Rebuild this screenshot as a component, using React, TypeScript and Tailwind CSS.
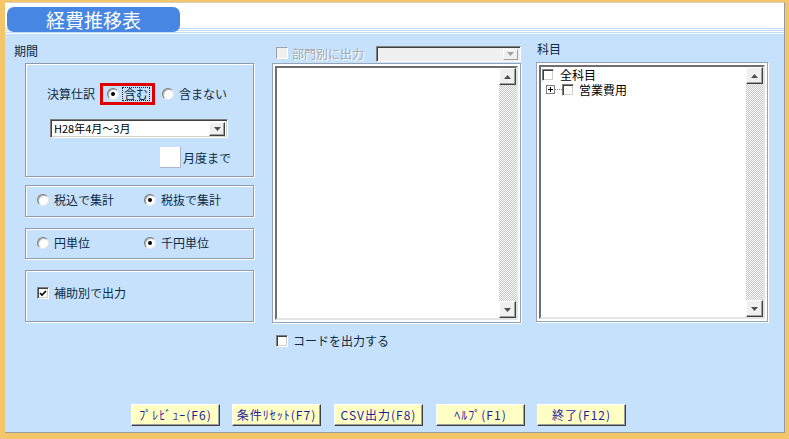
import React from 'react';

const etched = 'border border-[#8d9bab] shadow-[1px_1px_0_#ffffff,inset_1px_1px_0_#ffffff]';
const raised =
  'border border-t-white border-l-white border-r-[#404040] border-b-[#404040] shadow-[inset_-1px_-1px_0_#a0a0a0]';
const sunken =
  'border border-t-[#808080] border-l-[#808080] border-r-white border-b-white shadow-[inset_1px_1px_0_#404040,inset_-1px_-1px_0_#d4d0c8]';

const Radio = ({ checked, className = '' }: { checked?: boolean; className?: string }) => (
  <span
    className={`inline-flex w-[12px] h-[12px] shrink-0 items-center justify-center rounded-full bg-white border border-t-[#7a7a7a] border-l-[#7a7a7a] border-r-[#e6e6e6] border-b-[#e6e6e6] shadow-[inset_1px_1px_0_#b0b0b0] ${className}`}
  >
    {checked && <span className="w-[4px] h-[4px] rounded-full bg-black" />}
  </span>
);

const Check = ({ checked, disabled }: { checked?: boolean; disabled?: boolean }) => (
  <span
    className={`inline-flex w-[12px] h-[12px] shrink-0 items-center justify-center ${
      disabled
        ? 'bg-[#f0f0f0] border border-t-[#a0a0a0] border-l-[#a0a0a0] border-r-white border-b-white'
        : 'bg-white ' + sunken
    }`}
  >
    {checked && (
      <svg width="8" height="7" viewBox="0 0 8 7">
        <path d="M1 3 L3 5 L7 1" stroke="#000" strokeWidth="1.6" fill="none" />
      </svg>
    )}
  </span>
);

const Arrow = ({ down, color = '#505050' }: { down?: boolean; color?: string }) => (
  <svg width="7" height="4" viewBox="0 0 7 4">
    {down ? <polygon points="0,0 7,0 3.5,4" fill={color} /> : <polygon points="0,4 7,4 3.5,0" fill={color} />}
  </svg>
);

const Scrollbar = () => (
  <div className="flex flex-col w-[17px] h-full">
    <div className={`h-[17px] bg-[#f0f0f0] flex items-center justify-center ${raised}`}>
      <Arrow />
    </div>
    <div className="flex-1 bg-[repeating-conic-gradient(#c4c4c4_0_25%,#ffffff_0_50%)] bg-[length:2px_2px]" />
    <div className={`h-[17px] bg-[#f0f0f0] flex items-center justify-center ${raised}`}>
      <Arrow down />
    </div>
  </div>
);

const ListBox = ({ children }: { children?: React.ReactNode }) => (
  <div className="h-[260px] w-full border border-[#94a4b4] bg-white p-[2px] shadow-[1px_1px_0_#ffffff]">
    <div className="h-full flex border-2 border-t-[#6e6e6e] border-l-[#6e6e6e] border-r-[#e4e4e4] border-b-[#e4e4e4]">
      <div className="flex-1 bg-white">{children}</div>
      <Scrollbar />
    </div>
  </div>
);

const Button = ({ label, className = '' }: { label: string; className?: string }) => (
  <button
    className={`w-[89px] h-[22px] bg-[#ffffc4] text-[#1e1ea0] text-[12px] leading-none tracking-[1px] flex items-center justify-center ${raised} ${className}`}
  >
    {label}
  </button>
);

export default function App() {
  return (
    <div className="w-[789px] h-[439px] bg-[#f3c66b] pt-[2px] pl-[5px] pr-[4px] pb-[6px] font-['Noto_Sans_CJK_JP','Liberation_Sans',sans-serif] text-[12px] text-[#0d2a44] overflow-hidden">
      <div className="h-full flex flex-col bg-[#c6e1fb] border-t border-t-[#d8d0b8] border-r border-b border-[#9a9a9a]">
        {/* header */}
        <div className="h-[32px] shrink-0 pt-[4px] pl-[2px] bg-[linear-gradient(to_bottom,#fff_0,#fff_25px,#bcdcfb_25px,#bcdcfb_26px,#fff_26px,#fff_27px,#bcdcfb_27px,#bcdcfb_28px,#fff_28px,#fff_29px,#bcdcfb_29px,#bcdcfb_30px,#fff_30px,#fff_31px,#c6e1fb_31px)]">
          <div className="w-[173px] h-[25px] rounded-[7px] bg-[#4787e3] flex items-center pl-[39px] text-white text-[19px] leading-none">
            経費推移表
          </div>
        </div>

        {/* body */}
        <div className="flex items-start pl-[9px]">
          {/* left column */}
          <div className="w-[240px] pt-[9px] flex flex-col">
            <div className="leading-[14px] h-[14px]">期間</div>

            <div className={`ml-[11px] mt-[5px] w-[229px] h-[114px] flex flex-col ${etched}`}>
              <div className="flex items-center mt-[19px] ml-[21px] h-[22px]">
                <span className="leading-none">決算仕訳</span>
                <div className="ml-[5px] h-[22px] w-[55px] border-[3px] border-[#e00000] flex items-center pl-[4px]">
                  <Radio checked />
                  <span className="ml-[3px] px-[1px] border border-dotted border-[#222] leading-[12px]">含む</span>
                </div>
                <Radio className="ml-[7px]" />
                <span className="ml-[5px] leading-none">含まない</span>
              </div>
              <div className="mt-[14px] ml-[24px] w-[178px] h-[19px] bg-white flex items-center border border-t-[#808080] border-l-[#808080] border-r-white border-b-white shadow-[inset_1px_1px_0_#404040,inset_-1px_-1px_0_#d4d0c8] pl-[3px] pr-[2px]">
                <span className="flex-1 text-black text-[11px] leading-none">H28年4月～3月</span>
                <div className={`w-[16px] h-[14px] bg-[#f0f0f0] flex items-center justify-center ${raised}`}>
                  <Arrow down />
                </div>
              </div>
              <div className="flex items-center mt-[9px] ml-[134px]">
                <div className="w-[21px] h-[21px] bg-white border-r border-b border-[#a8b8c8]" />
                <span className="ml-[2px] leading-none">月度まで</span>
              </div>
            </div>

            <div className={`ml-[11px] mt-[8px] w-[229px] h-[32px] flex items-center pl-[11px] pb-[2px] ${etched}`}>
              <div className="w-[107px] flex items-center">
                <Radio />
                <span className="ml-[5px] leading-none">税込で集計</span>
              </div>
              <div className="flex items-center">
                <Radio checked />
                <span className="ml-[5px] leading-none">税抜で集計</span>
              </div>
            </div>

            <div className={`ml-[11px] mt-[11px] w-[229px] h-[31px] flex items-center pl-[11px] pb-[2px] ${etched}`}>
              <div className="w-[107px] flex items-center">
                <Radio />
                <span className="ml-[5px] leading-none">円単位</span>
              </div>
              <div className="flex items-center">
                <Radio checked />
                <span className="ml-[5px] leading-none">千円単位</span>
              </div>
            </div>

            <div className={`ml-[11px] mt-[11px] w-[229px] h-[52px] flex items-start pl-[11px] pt-[16px] ${etched}`}>
              <div className="flex items-center">
                <Check checked />
                <span className="ml-[5px] leading-none">補助別で出力</span>
              </div>
            </div>
          </div>

          {/* middle column */}
          <div className="ml-[18px] w-[249px] pt-[11px] flex flex-col">
            <div className="flex items-center h-[16px]">
              <span className="ml-[4px]">
                <Check disabled />
              </span>
              <span className="ml-[4px] leading-none text-[#a4a8ac] [text-shadow:1px_1px_0_#ffffff]">部門別に出力</span>
              <div className="ml-auto w-[145px] h-[16px] bg-[#f0f0f0] flex items-center justify-end border border-t-[#808080] border-l-[#808080] border-r-white border-b-white shadow-[inset_1px_1px_0_#404040] pr-[2px]">
                <div className="w-[15px] h-[11px] bg-[#f0f0f0] flex items-center justify-center border border-t-white border-l-white border-r-[#a0a0a0] border-b-[#a0a0a0]">
                  <Arrow down color="#a0a0a0" />
                </div>
              </div>
            </div>
            <div className="mt-[1px]">
              <ListBox />
            </div>
            <div className="flex items-center mt-[12px] ml-[4px]">
              <Check />
              <span className="ml-[5px] leading-none">コードを出力する</span>
            </div>
          </div>

          {/* right column */}
          <div className="ml-[15px] w-[232px] pt-[8px] flex flex-col">
            <div className="leading-[12px] h-[12px] ml-[1px]">科目</div>
            <div className="mt-[7px]">
              <ListBox>
                <div className="flex flex-col text-black pt-[1px] pl-[1px]">
                  <div className="flex items-center h-[13px]">
                    <Check />
                    <span className="ml-[6px] leading-none">全科目</span>
                  </div>
                  <div className="flex items-center h-[15px] mt-[1px]">
                    <span className="ml-[4px] w-[9px] h-[9px] border border-[#808080] bg-white flex items-center justify-center">
                      <svg width="5" height="5" viewBox="0 0 5 5">
                        <path d="M0 2.5 H5 M2.5 0 V5" stroke="#000" strokeWidth="1" />
                      </svg>
                    </span>
                    <span className="w-[7px] border-t border-dotted border-[#808080]" />
                    <Check />
                    <span className="ml-[5px] leading-none">営業費用</span>
                  </div>
                </div>
              </ListBox>
            </div>
          </div>
        </div>

        <div className="flex-1" />

        {/* buttons */}
        <div className="flex pl-[126px] pb-[6px]">
          <Button label="ﾌﾟﾚﾋﾞｭｰ(F6)" />
          <Button label="条件ﾘｾｯﾄ(F7)" className="ml-[12px]" />
          <Button label="CSV出力(F8)" className="ml-[13px]" />
          <Button label="ﾍﾙﾌﾟ(F1)" className="ml-[13px]" />
          <Button label="終了(F12)" className="ml-[12px]" />
        </div>
      </div>
    </div>
  );
}
